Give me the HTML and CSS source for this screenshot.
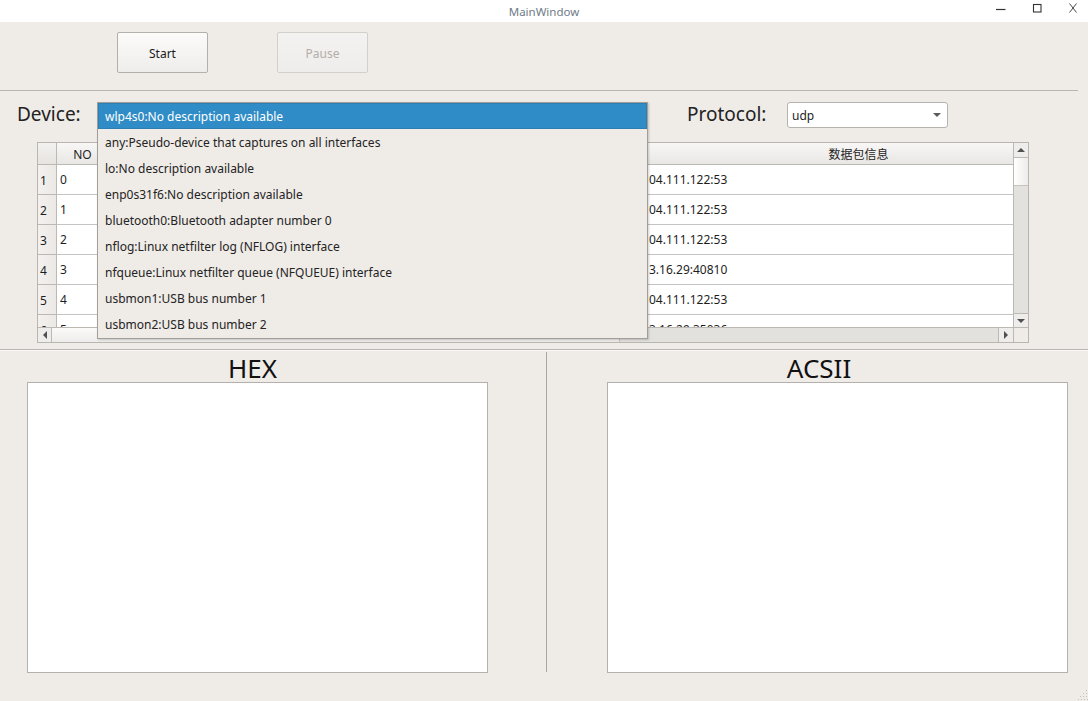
FILE: index.html
```html
<!DOCTYPE html>
<html lang="en">
<head>
<meta charset="utf-8">
<title>MainWindow</title>
<link rel="stylesheet" href="styles.css">
</head>
<body>
<div class="window">
  <header class="titlebar">
    <span class="tb-spacer"></span>
    <span class="title">MainWindow</span>
    <div class="wctl">
      <svg class="wicon" viewBox="0 0 10 10" width="10" height="10"><path d="M0 6.5H9.5" stroke="#333" stroke-width="1.2"/></svg>
      <svg class="wicon" viewBox="0 0 10 10" width="10" height="10"><rect x="1.5" y="1.5" width="7.5" height="7.5" fill="none" stroke="#333" stroke-width="1.1"/></svg>
      <svg class="wicon" viewBox="0 0 10 10" width="10" height="10"><path d="M1.5 0.5L8.5 9.5M8.5 0.5L1.5 9.5" stroke="#333" stroke-width="0.9"/></svg>
    </div>
  </header>

  <div class="toolbar">
    <button class="btn">Start</button>
    <button class="btn" disabled>Pause</button>
  </div>
  <div class="hline top"></div>

  <div class="filters">
    <span class="flabel dev-label">Device:</span>
    <div class="combo device">
      <ul class="popup">
        <li class="item selected">wlp4s0:No description available</li>
        <li class="item">any:Pseudo-device that captures on all interfaces</li>
        <li class="item">lo:No description available</li>
        <li class="item">enp0s31f6:No description available</li>
        <li class="item">bluetooth0:Bluetooth adapter number 0</li>
        <li class="item">nflog:Linux netfilter log (NFLOG) interface</li>
        <li class="item">nfqueue:Linux netfilter queue (NFQUEUE) interface</li>
        <li class="item">usbmon1:USB bus number 1</li>
        <li class="item">usbmon2:USB bus number 2</li>
      </ul>
    </div>
    <span class="flabel proto-label">Protocol:</span>
    <div class="combo proto">
      <span>udp</span>
      <svg class="arrow" viewBox="0 0 8 4" width="8" height="4"><path d="M0 0H8L4 4Z" fill="#5a5a5a"/></svg>
    </div>
  </div>

  <div class="table">
    <div class="viewport">
      <div class="trow head">
        <div class="c rh"></div>
        <div class="c no">NO</div>
        <div class="c c3"></div>
        <div class="c c4"></div>
        <div class="c info">数据包信息</div>
      </div>
      <div class="trow"><div class="c rh">1</div><div class="c no">0</div><div class="c c3"></div><div class="c c4"></div><div class="c info">04.111.122:53</div></div>
      <div class="trow"><div class="c rh">2</div><div class="c no">1</div><div class="c c3"></div><div class="c c4"></div><div class="c info">04.111.122:53</div></div>
      <div class="trow"><div class="c rh">3</div><div class="c no">2</div><div class="c c3"></div><div class="c c4"></div><div class="c info">04.111.122:53</div></div>
      <div class="trow"><div class="c rh">4</div><div class="c no">3</div><div class="c c3"></div><div class="c c4"></div><div class="c info">3.16.29:40810</div></div>
      <div class="trow"><div class="c rh">5</div><div class="c no">4</div><div class="c c3"></div><div class="c c4"></div><div class="c info">04.111.122:53</div></div>
      <div class="trow"><div class="c rh">6</div><div class="c no">5</div><div class="c c3"></div><div class="c c4"></div><div class="c info">3.16.29:35036</div></div>
    </div>
    <div class="vscroll">
      <div class="sbtn"><svg viewBox="0 0 8 4" width="8" height="4"><path d="M0 4H8L4 0Z" fill="#505050"/></svg></div>
      <div class="vhandle"></div>
      <div class="vtrough"></div>
      <div class="sbtn"><svg viewBox="0 0 8 4" width="8" height="4"><path d="M0 0H8L4 4Z" fill="#505050"/></svg></div>
    </div>
    <div class="hscroll">
      <div class="sbtn h"><svg viewBox="0 0 4 8" width="4" height="8"><path d="M4 0V8L0 4Z" fill="#505050"/></svg></div>
      <div class="hhandle"></div>
      <div class="htrough"></div>
      <div class="sbtn h"><svg viewBox="0 0 4 8" width="4" height="8"><path d="M0 0V8L4 4Z" fill="#505050"/></svg></div>
    </div>
    <div class="corner"></div>
  </div>

  <div class="hline mid"></div>

  <div class="panes">
    <section class="pane left">
      <h2 class="pane-title">HEX</h2>
      <div class="textbox"></div>
    </section>
    <div class="vline"></div>
    <section class="pane right">
      <h2 class="pane-title">ACSII</h2>
      <div class="textbox"></div>
    </section>
  </div>

  <svg class="grip" viewBox="0 0 10 10" width="10" height="10">
    <g fill="#c4c0bc">
      <rect x="8" y="0" width="1" height="1"/>
      <rect x="5" y="3" width="1" height="1"/><rect x="8" y="3" width="1" height="1"/>
      <rect x="2" y="6" width="1" height="1"/><rect x="5" y="6" width="1" height="1"/><rect x="8" y="6" width="1" height="1"/>
      <rect x="0" y="9" width="1" height="1"/><rect x="3" y="9" width="1" height="1"/><rect x="6" y="9" width="1" height="1"/><rect x="9" y="9" width="1" height="1"/>
    </g>
  </svg>
</div>
</body>
</html>
```

FILE: styles.css
```css
* { box-sizing: border-box; }

html, body {
  margin: 0;
  padding: 0;
}

body {
  background: #efebe7;
  font-family: "Noto Sans", "Noto Sans CJK SC", sans-serif;
  font-size: 12px;
  color: #232323;
}

.window {
  position: relative;
  width: 1088px;
  height: 701px;
  overflow: hidden;
}

/* title bar */
.titlebar {
  height: 22px;
  background: #ffffff;
  display: grid;
  grid-template-columns: 1fr auto 1fr;
  align-items: center;
}
.title {
  font-size: 11.5px;
  color: #6f7b88;
}
.wctl {
  display: flex;
  justify-content: flex-end;
  gap: 26px;
  padding-right: 10px;
  padding-bottom: 6px;
}
.wicon { display: block; }

/* toolbar */
.toolbar {
  height: 68px;
  display: flex;
  align-items: flex-start;
  gap: 69px;
  padding: 10px 0 0 117px;
}
.btn {
  width: 91px;
  height: 41px;
  font-family: inherit;
  font-size: 12px;
  color: #1a1a1a;
  border: 1px solid #b3afab;
  border-radius: 2px;
  background: linear-gradient(#fbfbfa, #efedeb);
  padding: 2px 0 0;
}
.btn:disabled {
  color: #b2aeaa;
  border-color: #d3cfcb;
  background: linear-gradient(#f4f2f0, #efedeb);
}

.hline { height: 1px; background: #b8b4b0; }
.hline.top { margin-right: 10px; }
.hline.mid { margin-top: 6px; }

/* filters */
.filters {
  display: flex;
  align-items: center;
  height: 25px;
  margin-top: 11px;
  padding-left: 17px;
}
.flabel {
  font-size: 19px;
  color: #222;
  line-height: 25px;
}
.dev-label { width: 80px; }
.proto-label { width: 100px; margin-left: 39px; }

.combo { position: relative; height: 25px; }
.combo.device { width: 551px; }
.combo.proto {
  width: 161px;
  height: 26px;
  background: #fff;
  border: 1px solid #b6b2ae;
  border-radius: 3px;
  display: flex;
  align-items: center;
  justify-content: space-between;
  padding: 1px 6px 0 4px;
  font-size: 12px;
}
.arrow { display: block; }

.popup {
  position: absolute;
  top: 0;
  left: 0;
  z-index: 10;
  width: 551px;
  height: 237px;
  margin: 0;
  padding: 0;
  list-style: none;
  background: #efebe7;
  border: 1px solid #a29f9b;
  box-shadow: 1px 1px 2px rgba(0,0,0,0.18);
}
.item {
  height: 26px;
  line-height: 26px;
  padding: 1px 0 0 7px;
  white-space: nowrap;
  color: #232323;
}
.item.selected {
  background: #308cc6;
  color: #ffffff;
  border: 1px solid #2b7fb4;
  line-height: 24px;
  padding: 1px 0 0 6px;
}

/* table */
.table {
  margin: 15px 0 0 37px;
  width: 992px;
  height: 201px;
  border: 1px solid #b9b6b2;
  background: #fff;
  display: grid;
  grid-template-columns: 975px 15px;
  grid-template-rows: 184px 15px;
}
.viewport {
  overflow: hidden;
  background: #fff;
}
.trow {
  display: flex;
  height: 30px;
}
.trow.head { height: 22px; }
.c {
  flex: none;
  height: 100%;
  border-right: 1px solid #c4c4c4;
  border-bottom: 1px solid #c4c4c4;
  display: flex;
  align-items: center;
  padding-left: 3px;
  white-space: nowrap;
  overflow: hidden;
  color: #1e1e1e;
}
.rh { width: 19px; background: linear-gradient(90deg, #f3f1ef, #ebe8e5); border-color: #bcb9b5; }
.no { width: 52px; }
.c3 { width: 232px; }
.c4 { width: 307px; }
.info { width: 365px; border-right: none; padding-left: 1px; }
.head .c {
  background: linear-gradient(#f8f7f6, #e9e7e4);
  border-color: #bcb9b5;
  justify-content: center;
  padding-left: 0;
  padding-top: 1px;
}
.head .rh { background: linear-gradient(#f3f1ef, #e6e3e0); }
.head .info { padding-left: 56px; }
.trow:not(.head) .rh { padding-left: 2px; padding-top: 2px; }

.vscroll {
  display: flex;
  flex-direction: column;
  border-left: 1px solid #bcb9b5;
  background: #e3e1de;
}
.sbtn {
  flex: none;
  height: 14px;
  display: flex;
  align-items: center;
  justify-content: center;
  background: #efedeb;
}
.sbtn svg { display: block; }
.vscroll .sbtn:first-child { border-bottom: 1px solid #bcb9b5; height: 15px; }
.vscroll .sbtn:last-child { border-top: 1px solid #bcb9b5; }
.vhandle {
  flex: none;
  height: 28px;
  background: linear-gradient(90deg, #ffffff, #eeecea);
  border-bottom: 1px solid #c6c3bf;
}
.vtrough { flex: 1; background: #e3e1de; }

.hscroll {
  display: flex;
  border-top: 1px solid #bcb9b5;
  background: #e3e1de;
}
.sbtn.h { width: 15px; height: 100%; }
.hscroll .sbtn:first-child { border-right: 1px solid #bcb9b5; width: 14px; }
.hscroll .sbtn:last-child { border-left: 1px solid #bcb9b5; }
.hhandle {
  flex: none;
  width: 568px;
  background: linear-gradient(#fbfaf9, #eeecea);
  border-right: 1px solid #c6c3bf;
}
.htrough { flex: 1; }
.corner {
  border-top: 1px solid #bcb9b5;
  border-left: 1px solid #bcb9b5;
  background: #efebe7;
}

/* panes */
.panes {
  display: flex;
  height: 350px;
  border-top: 1px solid #fbfaf9;
}
.pane { flex: none; }
.pane.left { width: 546px; padding-left: 27px; }
.pane.right { width: 541px; padding-left: 60px; }
.pane-title {
  margin: 0;
  height: 31px;
  font-size: 26px;
  font-weight: normal;
  line-height: 35px;
  color: #111;
  text-align: center;
  width: 461px;
}
.pane.left .pane-title { padding-right: 10px; }
.pane.right .pane-title { padding-right: 37px; }
.textbox {
  width: 461px;
  height: 291px;
  background: #fff;
  border: 1px solid #b3b0ad;
}
.vline {
  flex: none;
  width: 1px;
  height: 320px;
  margin-top: 1px;
  background: #a9a6a2;
}

.grip {
  position: absolute;
  right: 0;
  bottom: 1px;
}
```
